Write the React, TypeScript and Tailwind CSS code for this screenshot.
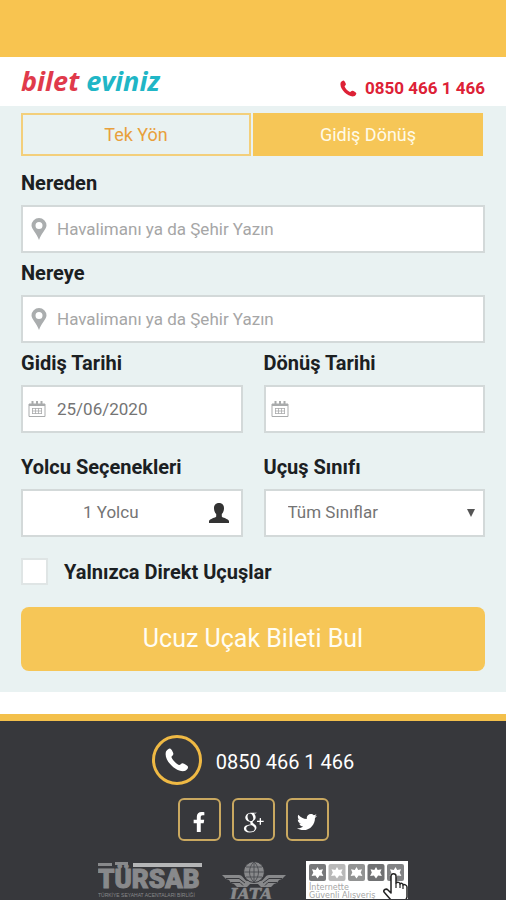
import { useState } from 'react';
import type { ReactNode } from 'react';
import { FaFacebookF, FaTwitter } from 'react-icons/fa';
import { TiSocialGooglePlus } from 'react-icons/ti';

const PHONE = '0850 466 1 466';

function Handset({ className }: { className: string }) {
  return (
    <svg viewBox="0 0 24 24" fill="currentColor" className={className} aria-hidden="true">
      <path d="M1 3.600C1.800 2 3.800.5 5 .6c1.200.2 3.200 3.700 3.400 5.300.1 1.300-2.200 2.300-1.900 3.400.9 2.700 4.600 6.500 7.500 7.700 1.100.4 2.200-1.900 3.600-1.700 1.700.3 5 2.300 5.400 3.500.4 1.300-1.600 3.900-3.500 4.300C11.500 24.600-1.800 12.500 1 3.600z" />
    </svg>
  );
}

function Pin() {
  return (
    <svg viewBox="0 0 16 22" className="h-[22px] w-4 shrink-0 text-[#aaadae]" aria-hidden="true">
      <path
        fill="currentColor"
        fillRule="evenodd"
        d="M8 0a7.500 7.500 0 0 1 7.500 7.500C15.500 11 10.500 15 8 22 5.500 15 .5 11 .5 7.500A7.500 7.500 0 0 1 8 0zm0 4a3.500 3.500 0 1 0 0 7 3.500 3.500 0 0 0 0-7z"
      />
    </svg>
  );
}

function Calendar() {
  return (
    <svg viewBox="0 0 18 18" className="size-[18px] shrink-0 text-[#a9abac]" fill="none" stroke="currentColor" aria-hidden="true">
      <path d="M1 4h16v12.500H1z" />
      <path d="M1 5h16" strokeWidth="2" />
      <path d="M4.500 1v4M9 1v4M13.500 1v4" strokeWidth="2" />
      <path d="M4 8.500h10M4 11h10M4 13.500h10M4.500 8v6M7.500 8v6M10.500 8v6M13.500 8v6" strokeWidth=".8" />
    </svg>
  );
}

function Person() {
  return (
    <svg viewBox="0 0 20 20" className="size-5 shrink-0 text-[#333]" fill="currentColor" aria-hidden="true">
      <path d="M10 0c3.300 0 5 2.200 5 5.200 0 2.400-.9 4.600-2.200 5.900v2.400c.3 1.200 6.700 2.200 7.200 4.500V20H0v-2c.5-2.300 6.900-3.300 7.200-4.500v-2.400C5.900 9.800 5 7.600 5 5.200 5 2.200 6.700 0 10 0z" />
    </svg>
  );
}

function Field({ id, label, children }: { id: string; label: string; children: ReactNode }) {
  return (
    <div className="min-w-0 flex-1">
      <label htmlFor={id} className="block pb-2.5 text-xl leading-6 font-bold text-[#1b2022]">
        {label}
      </label>
      <div className="flex h-12 items-center border-2 border-[#d3d9d9] bg-white text-[17px] text-[#747474]">
        {children}
      </div>
    </div>
  );
}

function AirportField({ id, label }: { id: string; label: string }) {
  return (
    <Field id={id} label={label}>
      <span className="flex w-[34px] pl-2">
        <Pin />
      </span>
      <input
        id={id}
        type="text"
        placeholder="Havalimanı ya da Şehir Yazın"
        className="h-full min-w-0 flex-1 outline-none placeholder:text-[#a6a6a6]"
      />
    </Field>
  );
}

function DateField({ id, label, value }: { id: string; label: string; value: string }) {
  return (
    <Field id={id} label={label}>
      <span className="flex w-[34px] pl-[5px]">
        <Calendar />
      </span>
      <input id={id} type="text" defaultValue={value} className="h-full min-w-0 flex-1 outline-none" />
    </Field>
  );
}

function SocialLink({ label, children }: { label: string; children: ReactNode }) {
  return (
    <a
      href="#"
      aria-label={label}
      className="flex size-[43px] items-center justify-center rounded-md border-2 border-[#c9a860] pt-1 text-white"
    >
      {children}
    </a>
  );
}

function TursabLogo() {
  return (
    <svg viewBox="0 0 104 60" className="h-[60px] w-[104px]" fill="#88898b" role="img" aria-label="TÜRSAB">
      <path d="M0 2h14v3H0zM17 1h13v3H17z" />
      <path d="M35 2h69v4H35z" fill="#b5b6b7" />
      <text x="0" y="27" fontSize="26" fontWeight="900" fontFamily="Roboto" stroke="#88898b">
        TÜRSAB
      </text>
      <text x="0" y="36" fontSize="5" fontFamily="Liberation Sans">
        TÜRKİYE SEYAHAT ACENTALARI BİRLİĞİ
      </text>
    </svg>
  );
}

function IataLogo() {
  return (
    <svg viewBox="0 0 64 60" className="h-[60px] w-16" fill="#88898b" role="img" aria-label="IATA">
      <path d="M0 14h17c4 0 5 5 8 6h14c3-1 4-6 8-6h17l-4 4 -3 1-2 3-3 1-3 3H39l-3-3h-8l-3 3H15l-3-3-3-1-2-3-3-1z" />
      <path d="M4 17.500h13l6 4.500M60 17.500H47l-6 4.500M9 21.500h9l3 3M55 21.500h-9l-3 3" fill="none" stroke="#37383c" />
      <circle cx="32" cy="11" r="10.500" stroke="#37383c" />
      <path
        d="M22 11h20M24 6h16M24 16h16M32 1v20M32 1c-6 5-6 15 0 20M32 1c6 5 6 15 0 20"
        fill="none"
        stroke="#4b4c50"
        strokeWidth=".9"
      />
      <text x="8" y="39" fontSize="16" fontWeight="bold" fontStyle="italic" fontFamily="DejaVu Serif" stroke="#88898b" strokeWidth=".6">
        IATA
      </text>
    </svg>
  );
}

function TrustBadge() {
  const tiles = ['#77787a', '#b9b9b9', '#929393', '#707173', '#818284'];
  return (
    <svg viewBox="0 0 102 60" className="h-[60px] w-[102px]" role="img" aria-label="İnternette Güvenli Alışveriş">
      <path d="M0 0h102v60H0z" fill="#fff" />
      {tiles.map((fill, i) => (
        <g key={i} transform={`translate(${3 + i * 19.5} 3)`}>
          <rect width="17" height="17" rx="2" fill={fill} />
          <path
            d="M8.500 3l1.700 3 3.800-.8-1.300 3.200 1.700 3.500-3.800-.4-2.100 2.900-2.100-2.900-3.800.4 1.700-3.500L3 5.200l3.800.8z"
            fill="#fff"
          />
        </g>
      ))}
      <g fill="#a5a5a5" fontSize="8" fontFamily="DejaVu Sans">
        <text x="3" y="29">İnternette</text>
        <text x="3" y="37">Güvenli Alışveriş</text>
      </g>
    </svg>
  );
}

function HandPointer() {
  return (
    <svg viewBox="0 0 26 34" className="absolute top-3 right-0 h-[34px] w-[26px]" aria-hidden="true">
      <path
        d="M9 3c0-3 5-3 5 0v7c1-1 4-1 4 1 1-1 3-1 3 1 1-1 4 0 4 2v10l-3 8H11l-2-5-7-8c-1-2 2-4 4-2l3 3z"
        fill="#fff"
        stroke="#222"
        strokeWidth="1.500"
        strokeLinejoin="round"
      />
      <path d="M14 10v5M18 11v4M21 12v4" stroke="#222" strokeWidth="1.200" />
    </svg>
  );
}

function SearchForm() {
  const [roundTrip, setRoundTrip] = useState(true);
  const active = 'bg-[#f6c657] text-[#fffbe8]';
  const idle = 'text-[#e8a03c]';

  return (
    <form className="bg-[#e9f2f2] px-[21px] pt-[7px] pb-[21px]" onSubmit={(e) => e.preventDefault()}>
      <div className="flex gap-0.5 pr-0.5 text-lg leading-6">
        <button
          type="button"
          onClick={() => setRoundTrip(false)}
          className={`h-[43px] flex-1 border-2 border-[#f3cf7b] ${roundTrip ? idle : active}`}
        >
          Tek Yön
        </button>
        <button
          type="button"
          onClick={() => setRoundTrip(true)}
          className={`h-[43px] flex-1 border-2 border-[#f6c657] ${roundTrip ? active : idle}`}
        >
          Gidiş Dönüş
        </button>
      </div>

      <div className="flex flex-col gap-2 pt-[15px]">
        <AirportField id="from" label="Nereden" />
        <AirportField id="to" label="Nereye" />
        <div className="flex gap-[21px]">
          <DateField id="departure" label="Gidiş Tarihi" value="25/06/2020" />
          <DateField id="return" label="Dönüş Tarihi" value="" />
        </div>
      </div>

      <div className="flex gap-[21px] pt-[22px]">
        <Field id="passengers" label="Yolcu Seçenekleri">
          <button id="passengers" type="button" className="flex h-full flex-1 items-center pr-3">
            <span className="flex-1 pr-2.5 text-center">1 Yolcu</span>
            <Person />
          </button>
        </Field>
        <Field id="cabin" label="Uçuş Sınıfı">
          <select id="cabin" className="h-full min-w-0 flex-1 appearance-none pl-[22px] outline-none">
            <option>Tüm Sınıflar</option>
            <option>Ekonomi</option>
            <option>Business</option>
          </select>
          <svg viewBox="0 0 8 8" className="mr-2 size-2 text-[#555]" fill="currentColor" aria-hidden="true">
            <path d="M0 0h8L4 8z" />
          </svg>
        </Field>
      </div>

      <label className="flex items-center gap-4 pt-[21px] text-xl leading-6 font-bold text-[#1b2022]">
        <input type="checkbox" className="size-[27px] appearance-none border-2 border-[#dfe5e5] bg-white checked:bg-[#f6c657]" />
        Yalnızca Direkt Uçuşlar
      </label>

      <button type="submit" className="mt-[22px] h-16 w-full rounded-lg bg-[#f6c657] text-[25px] text-[#fffdf3]">
        Ucuz Uçak Bileti Bul
      </button>
    </form>
  );
}

export default function App() {
  return (
    <div className="flex min-h-screen flex-col bg-white font-[Roboto,sans-serif]">
      <div className="h-[57px] bg-[#f8c450]" />
      <header className="flex h-[49px] justify-between px-[21px]">
        <a href="#" className="pt-2 font-['Open_Sans',sans-serif] text-[27px] leading-8 font-bold text-[#e03a4b] italic">
          bilet <span className="text-[#20b6c6]">eviniz</span>
        </a>
        <a href="#" className="flex items-center gap-2 pt-3.5 text-[17px] font-bold text-[#dd2136]">
          <Handset className="size-[17px]" />
          {PHONE}
        </a>
      </header>

      <SearchForm />

      <footer className="mt-[22px] flex flex-1 flex-col items-center border-t-[7px] border-[#f3c04b] bg-[#37383c] pt-3.5">
        <a href="#" className="flex items-center gap-3.5 text-xl text-white">
          <span className="flex size-[50px] items-center justify-center rounded-full border-3 border-[#efb944]">
            <Handset className="size-6" />
          </span>
          <span className="pt-1">{PHONE}</span>
        </a>
        <div className="flex gap-[11px] pt-[13px]">
          <SocialLink label="Facebook">
            <FaFacebookF className="size-5" />
          </SocialLink>
          <SocialLink label="Google Plus">
            <TiSocialGooglePlus className="size-8 stroke-current" />
          </SocialLink>
          <SocialLink label="Twitter">
            <FaTwitter className="size-5" />
          </SocialLink>
        </div>
        {/* partner logos, only their top part shows above the fold */}
        <div className="mt-5 flex h-[38px] gap-5 overflow-hidden">
          <TursabLogo />
          <IataLogo />
          <div className="relative">
            <TrustBadge />
            <HandPointer />
          </div>
        </div>
      </footer>
    </div>
  );
}
